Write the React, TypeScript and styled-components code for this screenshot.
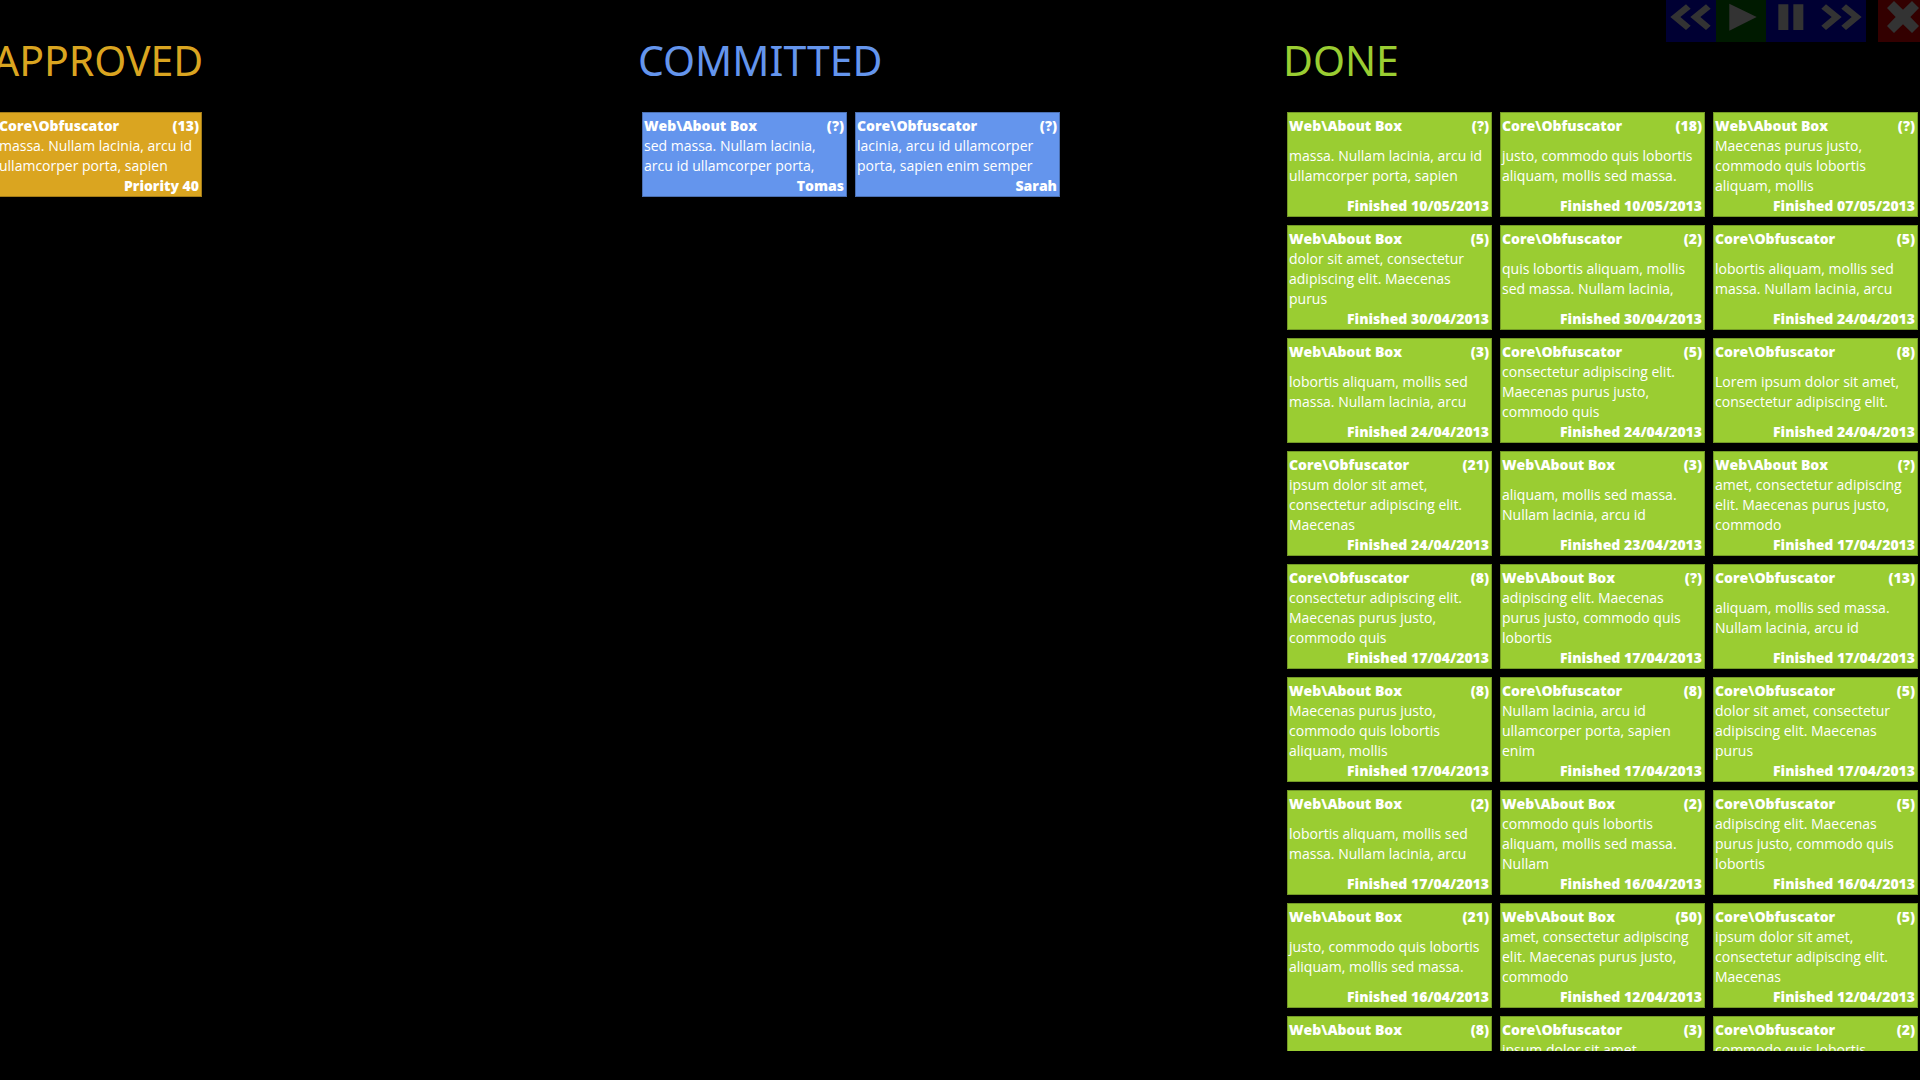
import React from "react";
import styled, { createGlobalStyle } from "styled-components";

const GlobalStyle = createGlobalStyle`
  *, *::before, *::after { box-sizing: border-box; }
  body {
    margin: 0;
    background: #000;
    color: #fff;
    font-family: "Open Sans", "Noto Sans", sans-serif;
    font-size: 14px;
    line-height: 20px;
  }
`;

type Item = {
  area: string;
  effort: string;
  text?: string;
  footer?: string;
};

const WEB = "Web\\About Box";
const CORE = "Core\\Obfuscator";

const item = (area: string, effort: string, text?: string, footer?: string): Item => ({
  area,
  effort,
  text,
  footer,
});

const approved: Item[] = [
  item(CORE, "13", "massa. Nullam lacinia, arcu id\nullamcorper porta, sapien", "Priority 40"),
];

const committed: Item[] = [
  item(WEB, "?", "sed massa. Nullam lacinia,\narcu id ullamcorper porta,", "Tomas"),
  item(CORE, "?", "lacinia, arcu id ullamcorper\nporta, sapien enim semper", "Sarah"),
];

const done: Item[] = [
  item(WEB, "?", "massa. Nullam lacinia, arcu id\nullamcorper porta, sapien", "Finished 10/05/2013"),
  item(CORE, "18", "justo, commodo quis lobortis\naliquam, mollis sed massa.", "Finished 10/05/2013"),
  item(WEB, "?", "Maecenas purus justo,\ncommodo quis lobortis\naliquam, mollis", "Finished 07/05/2013"),
  item(WEB, "5", "dolor sit amet, consectetur\nadipiscing elit. Maecenas\npurus", "Finished 30/04/2013"),
  item(CORE, "2", "quis lobortis aliquam, mollis\nsed massa. Nullam lacinia,", "Finished 30/04/2013"),
  item(CORE, "5", "lobortis aliquam, mollis sed\nmassa. Nullam lacinia, arcu", "Finished 24/04/2013"),
  item(WEB, "3", "lobortis aliquam, mollis sed\nmassa. Nullam lacinia, arcu", "Finished 24/04/2013"),
  item(CORE, "5", "consectetur adipiscing elit.\nMaecenas purus justo,\ncommodo quis", "Finished 24/04/2013"),
  item(CORE, "8", "Lorem ipsum dolor sit amet,\nconsectetur adipiscing elit.", "Finished 24/04/2013"),
  item(CORE, "21", "ipsum dolor sit amet,\nconsectetur adipiscing elit.\nMaecenas", "Finished 24/04/2013"),
  item(WEB, "3", "aliquam, mollis sed massa.\nNullam lacinia, arcu id", "Finished 23/04/2013"),
  item(WEB, "?", "amet, consectetur adipiscing\nelit. Maecenas purus justo,\ncommodo", "Finished 17/04/2013"),
  item(CORE, "8", "consectetur adipiscing elit.\nMaecenas purus justo,\ncommodo quis", "Finished 17/04/2013"),
  item(WEB, "?", "adipiscing elit. Maecenas\npurus justo, commodo quis\nlobortis", "Finished 17/04/2013"),
  item(CORE, "13", "aliquam, mollis sed massa.\nNullam lacinia, arcu id", "Finished 17/04/2013"),
  item(WEB, "8", "Maecenas purus justo,\ncommodo quis lobortis\naliquam, mollis", "Finished 17/04/2013"),
  item(CORE, "8", "Nullam lacinia, arcu id\nullamcorper porta, sapien\nenim", "Finished 17/04/2013"),
  item(CORE, "5", "dolor sit amet, consectetur\nadipiscing elit. Maecenas\npurus", "Finished 17/04/2013"),
  item(WEB, "2", "lobortis aliquam, mollis sed\nmassa. Nullam lacinia, arcu", "Finished 17/04/2013"),
  item(WEB, "2", "commodo quis lobortis\naliquam, mollis sed massa.\nNullam", "Finished 16/04/2013"),
  item(CORE, "5", "adipiscing elit. Maecenas\npurus justo, commodo quis\nlobortis", "Finished 16/04/2013"),
  item(WEB, "21", "justo, commodo quis lobortis\naliquam, mollis sed massa.", "Finished 16/04/2013"),
  item(WEB, "50", "amet, consectetur adipiscing\nelit. Maecenas purus justo,\ncommodo", "Finished 12/04/2013"),
  item(CORE, "5", "ipsum dolor sit amet,\nconsectetur adipiscing elit.\nMaecenas", "Finished 12/04/2013"),
  item(WEB, "8"),
  item(CORE, "3", "ipsum dolor sit amet,"),
  item(CORE, "2", "commodo quis lobortis"),
];

const Screen = styled.div`
  position: relative;
  height: 100vh;
  padding-bottom: 29px;
  overflow: hidden;
`;

/* The board is panned sideways: its outer columns run past both edges. */
const Board = styled.main`
  display: grid;
  grid-template-columns: repeat(3, minmax(0, 1fr));
  height: 100%;
  margin: 0 -8px 0 -7px;
  overflow: hidden;
`;

const Column = styled.section`
  padding-top: 30px;
`;

const Title = styled.h1<{ $color: string }>`
  margin: 0 0 22px;
  color: ${(p) => p.$color};
  font-family: "Noto Sans", "Open Sans", sans-serif;
  font-size: 41px;
  font-weight: 400;
  line-height: 60px;
`;

const Cards = styled.div`
  display: grid;
  grid-template-columns: repeat(3, minmax(0, 1fr));
  gap: 8px;
  padding: 0 10px 0 4px;
`;

const Card = styled.article<{ $color: string }>`
  padding: 3px 1px 0;
  border: 1px solid color-mix(in srgb, ${(p) => p.$color} 75%, #000);
  background: ${(p) => p.$color};
`;

const CardHead = styled.header`
  display: flex;
  justify-content: space-between;
  padding-right: 1px;
  font-weight: 800;
`;

const CardText = styled.p<{ $lines: number }>`
  display: flex;
  flex-direction: column;
  justify-content: center;
  min-height: ${(p) => p.$lines * 20}px;
  margin: 0;
  white-space: pre;
`;

const CardFoot = styled.footer`
  padding-right: 1px;
  font-weight: 800;
  text-align: right;
`;

const Toolbar = styled.div`
  position: absolute;
  top: 0;
  right: -8px;
  display: flex;
`;

const ToolButton = styled.button<{ $bg: string; $apart?: boolean }>`
  display: block;
  width: 50px;
  height: 42px;
  margin: 0 0 0 ${(p) => (p.$apart ? 12 : 0)}px;
  padding: 0;
  border: 0;
  background: ${(p) => p.$bg};
  cursor: pointer;

  svg {
    display: block;
    fill: #333;
  }
`;

type ToolProps = { label: string; bg: string; path: string; apart?: boolean };

const Tool = ({ label, bg, path, apart }: ToolProps) => (
  <ToolButton type="button" aria-label={label} $bg={bg} $apart={apart}>
    <svg width="50" height="42" viewBox="0 0 150 126" aria-hidden="true">
      <path d={path} />
    </svg>
  </ToolButton>
);

type LaneProps = { title: string; color: string; items: Item[]; lines: number };

const Lane = ({ title, color, items, lines }: LaneProps) => (
  <Column>
    <Title $color={color}>{title}</Title>
    <Cards>
      {items.map((it, i) => (
        <Card key={i} $color={color}>
          <CardHead>
            <span>{it.area}</span>
            <span>({it.effort})</span>
          </CardHead>
          <CardText $lines={it.footer ? lines : 1}>{it.text}</CardText>
          {it.footer && <CardFoot>{it.footer}</CardFoot>}
        </Card>
      ))}
    </Cards>
  </Column>
);

export default function App() {
  return (
    <Screen>
      <GlobalStyle />
      <Board>
        <Lane title="APPROVED" color="#daa520" items={approved} lines={2} />
        <Lane title="COMMITTED" color="#6495ed" items={committed} lines={2} />
        <Lane title="DONE" color="#9acd32" items={done} lines={3} />
      </Board>
      <Toolbar>
        <Tool
          label="Rewind"
          bg="#000033"
          path="M13 51 60 13 74 26 43 51 74 77 60 90ZM73 51 120 13 134 26 103 51 134 77 120 90Z"
        />
        <Tool label="Play" bg="#001a00" path="M40 11 122 51 40 92Z" />
        <Tool label="Pause" bg="#000033" path="M37 13H67V90H37ZM82 13H112V90H82Z" />
        <Tool
          label="Fast forward"
          bg="#000033"
          path="M30 13 77 51 30 90 16 77 47 51 16 26ZM90 13 137 51 90 90 76 77 107 51 76 26Z"
        />
        <Tool
          label="Close"
          bg="#330000"
          apart
          path="M48 3 75 29 102 3 123 24 97 51 123 78 102 99 75 73 48 99 27 78 53 51 27 24Z"
        />
      </Toolbar>
    </Screen>
  );
}
